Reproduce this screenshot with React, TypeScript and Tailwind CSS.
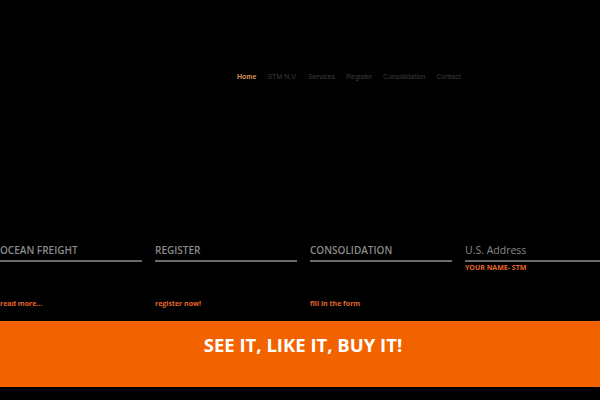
import React from "react";

const navItems = ["Home", "STM N.V.", "Services", "Register", "Consolidation", "Contact"];

const cols = [
  { title: "OCEAN FREIGHT", link: "read more..." },
  { title: "REGISTER", link: "register now!" },
  { title: "CONSOLIDATION", link: "fill in the form" },
];

export default function App() {
  return (
    <div
      className="w-[600px] h-[400px] bg-black overflow-hidden flex flex-col"
      style={{ fontFamily: '"Open Sans", "Noto Sans", sans-serif' }}
    >
      <nav
        className="flex gap-[11px] pl-[237px] pt-[72px] h-[243px] text-[7px] leading-[10px]"
        style={{ fontFamily: '"Liberation Sans", Arial, sans-serif' }}
      >
        {navItems.map((n, i) => (
          <span key={n} className={i === 0 ? "text-[#d8915e] font-bold" : "text-[#3d3d3d]"}>
            {n}
          </span>
        ))}
      </nav>
      <div className="flex gap-[13px] h-[78px]">
        {cols.map((c) => (
          <div key={c.title} className="w-[142px] flex flex-col">
            <div className="text-[10px] leading-[14px] font-semibold text-[#8a8a8a]">{c.title}</div>
            <div className="mt-[3px] h-[2px] bg-[#6b6b6b]" />
            <div className="mt-[37px] text-[7px] leading-[10px] font-bold text-[#e5652a]">{c.link}</div>
          </div>
        ))}
        <div className="flex-1 flex flex-col">
          <div className="text-[10.5px] leading-[14px] text-[#8a8a8a]">U.S. Address</div>
          <div className="mt-[3px] h-[2px] bg-[#6b6b6b]" />
          <div className="mt-[1px] text-[7px] leading-[10px] font-bold text-[#e5652a]">YOUR NAME- STM</div>
        </div>
      </div>
      <div className="h-[66px] bg-[#f26300] flex justify-center pt-[12px] pl-[6px]">
        <span className="text-white font-bold text-[18.5px] leading-[24px]">SEE IT, LIKE IT, BUY IT!</span>
      </div>
    </div>
  );
}
